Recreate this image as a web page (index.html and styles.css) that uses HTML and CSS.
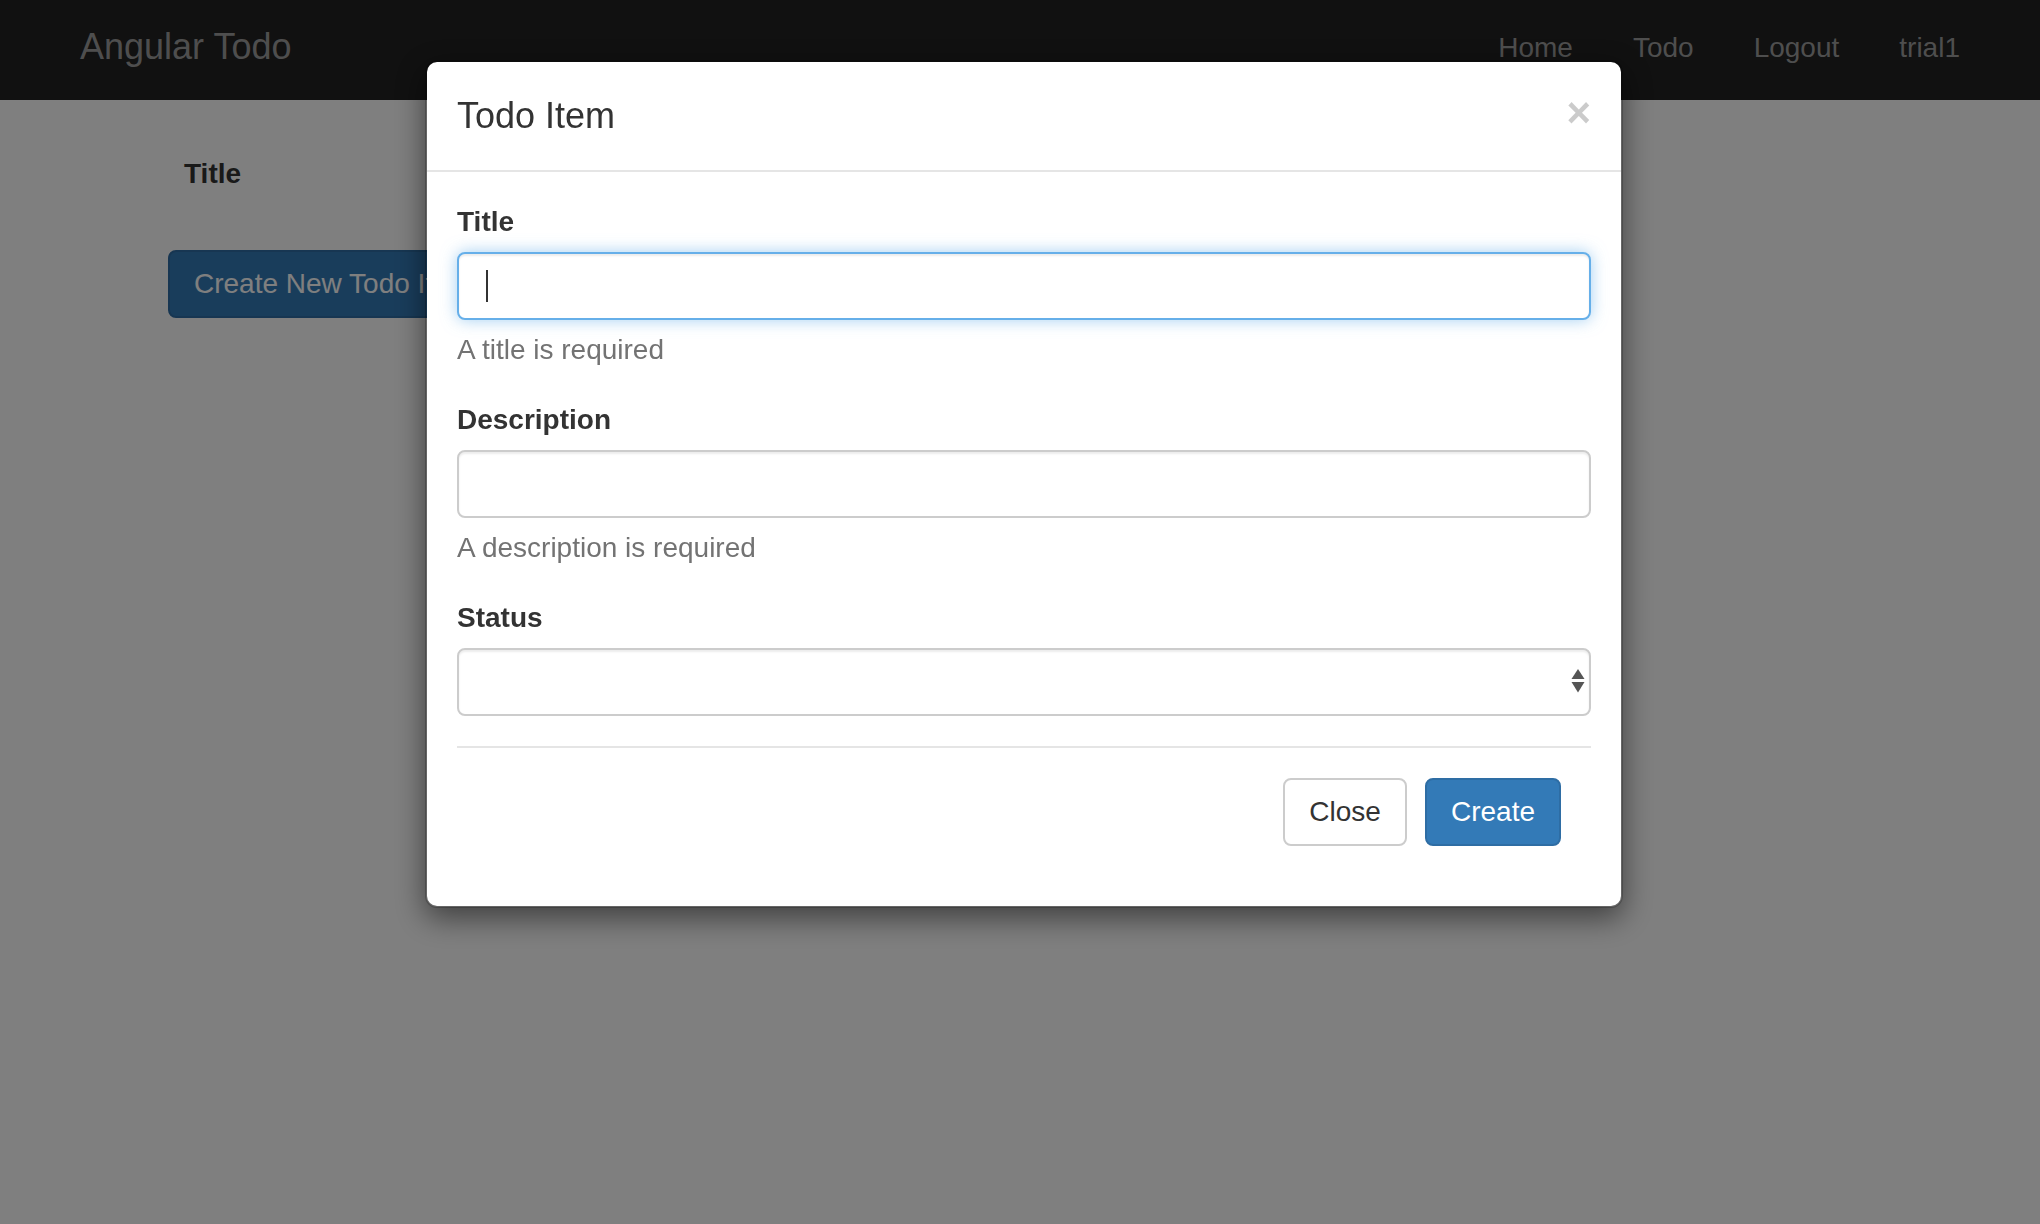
FILE: index.html
```html
<!DOCTYPE html>
<html lang="en">
<head>
<meta charset="utf-8">
<title>Angular Todo</title>
<link rel="stylesheet" href="styles.css">
</head>
<body>
<nav class="navbar">
  <div class="navbar-container">
    <a class="brand" href="#">Angular Todo</a>
    <ul class="nav">
      <li><a href="#">Home</a></li>
      <li><a href="#">Todo</a></li>
      <li><a href="#">Logout</a></li>
      <li><a href="#">trial1</a></li>
    </ul>
  </div>
</nav>

<main class="page">
  <table class="todo-table">
    <thead>
      <tr><th>Title</th></tr>
    </thead>
  </table>
  <button class="btn btn-primary" type="button">Create New Todo Item</button>
</main>

<div class="backdrop"></div>

<div class="modal">
  <div class="modal-dialog">
    <div class="modal-content">
      <div class="modal-header">
        <h4 class="modal-title">Todo Item</h4>
        <span class="close">&times;</span>
      </div>
      <div class="modal-body">
        <div class="form-group">
          <label class="label">Title</label>
          <div class="form-control focused"><span class="caret"></span></div>
          <div class="help-block">A title is required</div>
        </div>
        <div class="form-group">
          <label class="label">Description</label>
          <div class="form-control"></div>
          <div class="help-block">A description is required</div>
        </div>
        <div class="form-group">
          <label class="label">Status</label>
          <div class="form-control select">
            <svg class="select-arrows" width="14" height="24" viewBox="0 0 14 24">
              <polygon points="7,0 13.5,10 0.5,10" fill="#555"/>
              <polygon points="0.5,13 13.5,13 7,23.5" fill="#555"/>
            </svg>
          </div>
        </div>
        <div class="modal-footer">
          <button class="btn btn-default" type="button">Close</button>
          <button class="btn btn-primary" type="button">Create</button>
        </div>
      </div>
    </div>
  </div>
</div>
</body>
</html>
```

FILE: styles.css
```css
* {
  box-sizing: border-box;
}

html, body {
  margin: 0;
  padding: 0;
}

body {
  font-family: "Liberation Sans", Arial, Helvetica, sans-serif;
  font-size: 28px;
  line-height: 40px;
  color: #333;
  background: #fff;
  width: 2040px;
  height: 1224px;
  overflow: hidden;
}

/* Navbar */
.navbar {
  height: 100px;
  background: #222;
}

.navbar-container {
  width: 1940px;
  margin: 0 auto;
  padding: 0 30px;
  display: flex;
  justify-content: space-between;
  align-items: flex-start;
}

.brand {
  display: block;
  margin-left: -30px;
  padding: 27px 30px 33px;
  font-size: 36px;
  line-height: 40px;
  color: #9d9d9d;
  text-decoration: none;
}

.nav {
  display: flex;
  list-style: none;
  margin: 0 -30px 0 0;
  padding: 0;
}

.nav a {
  display: block;
  padding: 28px 30px 32px;
  line-height: 40px;
  color: #9d9d9d;
  text-decoration: none;
}

/* Page */
.page {
  padding: 38px 168px 0;
}

.todo-table {
  border-collapse: collapse;
  margin-bottom: 40px;
}

.todo-table th {
  padding: 16px;
  text-align: left;
  font-weight: bold;
  line-height: 40px;
}

.btn {
  display: inline-block;
  font-family: inherit;
  font-size: 28px;
  line-height: 40px;
  padding: 12px 24px;
  border: 2px solid transparent;
  border-radius: 8px;
  cursor: pointer;
  white-space: nowrap;
  margin: 0;
}

.btn-primary {
  background: #337ab7;
  border-color: #2e6da4;
  color: #fff;
}

.btn-default {
  background: #fff;
  border-color: #ccc;
  color: #333;
}

/* Backdrop */
.backdrop {
  position: fixed;
  inset: 0;
  background: rgba(0, 0, 0, 0.5);
}

/* Modal */
.modal {
  position: fixed;
  inset: 0;
  padding-left: 8px;
}

.modal-dialog {
  width: 1198px;
  margin: 60px auto;
}

.modal-content {
  background: #fff;
  background-clip: padding-box;
  border: 2px solid rgba(0, 0, 0, 0.2);
  border-radius: 12px;
  box-shadow: 0 10px 30px rgba(0, 0, 0, 0.5);
}

.modal-header {
  padding: 30px;
  border-bottom: 2px solid #e5e5e5;
  display: flex;
  justify-content: space-between;
  align-items: flex-start;
}

.modal-title {
  margin: 0;
  font-size: 36px;
  line-height: 48px;
  font-weight: normal;
  color: #333;
}

.close {
  font-size: 42px;
  font-weight: bold;
  line-height: 1;
  color: #000;
  opacity: 0.2;
  margin-top: 0;
}

.modal-body {
  padding: 30px;
}

.form-group {
  margin-bottom: 30px;
}

.label {
  display: inline-block;
  font-weight: bold;
  margin-bottom: 10px;
}

.form-control {
  display: block;
  width: 100%;
  height: 68px;
  padding: 12px 24px;
  background: #fff;
  border: 2px solid #ccc;
  border-radius: 8px;
  box-shadow: inset 0 2px 2px rgba(0, 0, 0, 0.075);
}

.form-control.focused {
  border-color: #66afe9;
  box-shadow: inset 0 2px 2px rgba(0, 0, 0, 0.075), 0 0 16px rgba(102, 175, 233, 0.6);
  display: flex;
  align-items: center;
}

.caret {
  display: block;
  width: 2px;
  height: 32px;
  margin-left: 3px;
  background: #333;
}

.form-control.select {
  display: flex;
  justify-content: flex-end;
  align-items: center;
  padding-right: 4px;
}

.select-arrows {
  display: block;
  margin-bottom: 2px;
}

.help-block {
  display: block;
  margin: 10px 0 20px;
  color: #737373;
}

.modal-footer {
  border-top: 2px solid #e5e5e5;
  padding: 30px;
  display: flex;
  justify-content: flex-end;
  gap: 18px;
}
```
